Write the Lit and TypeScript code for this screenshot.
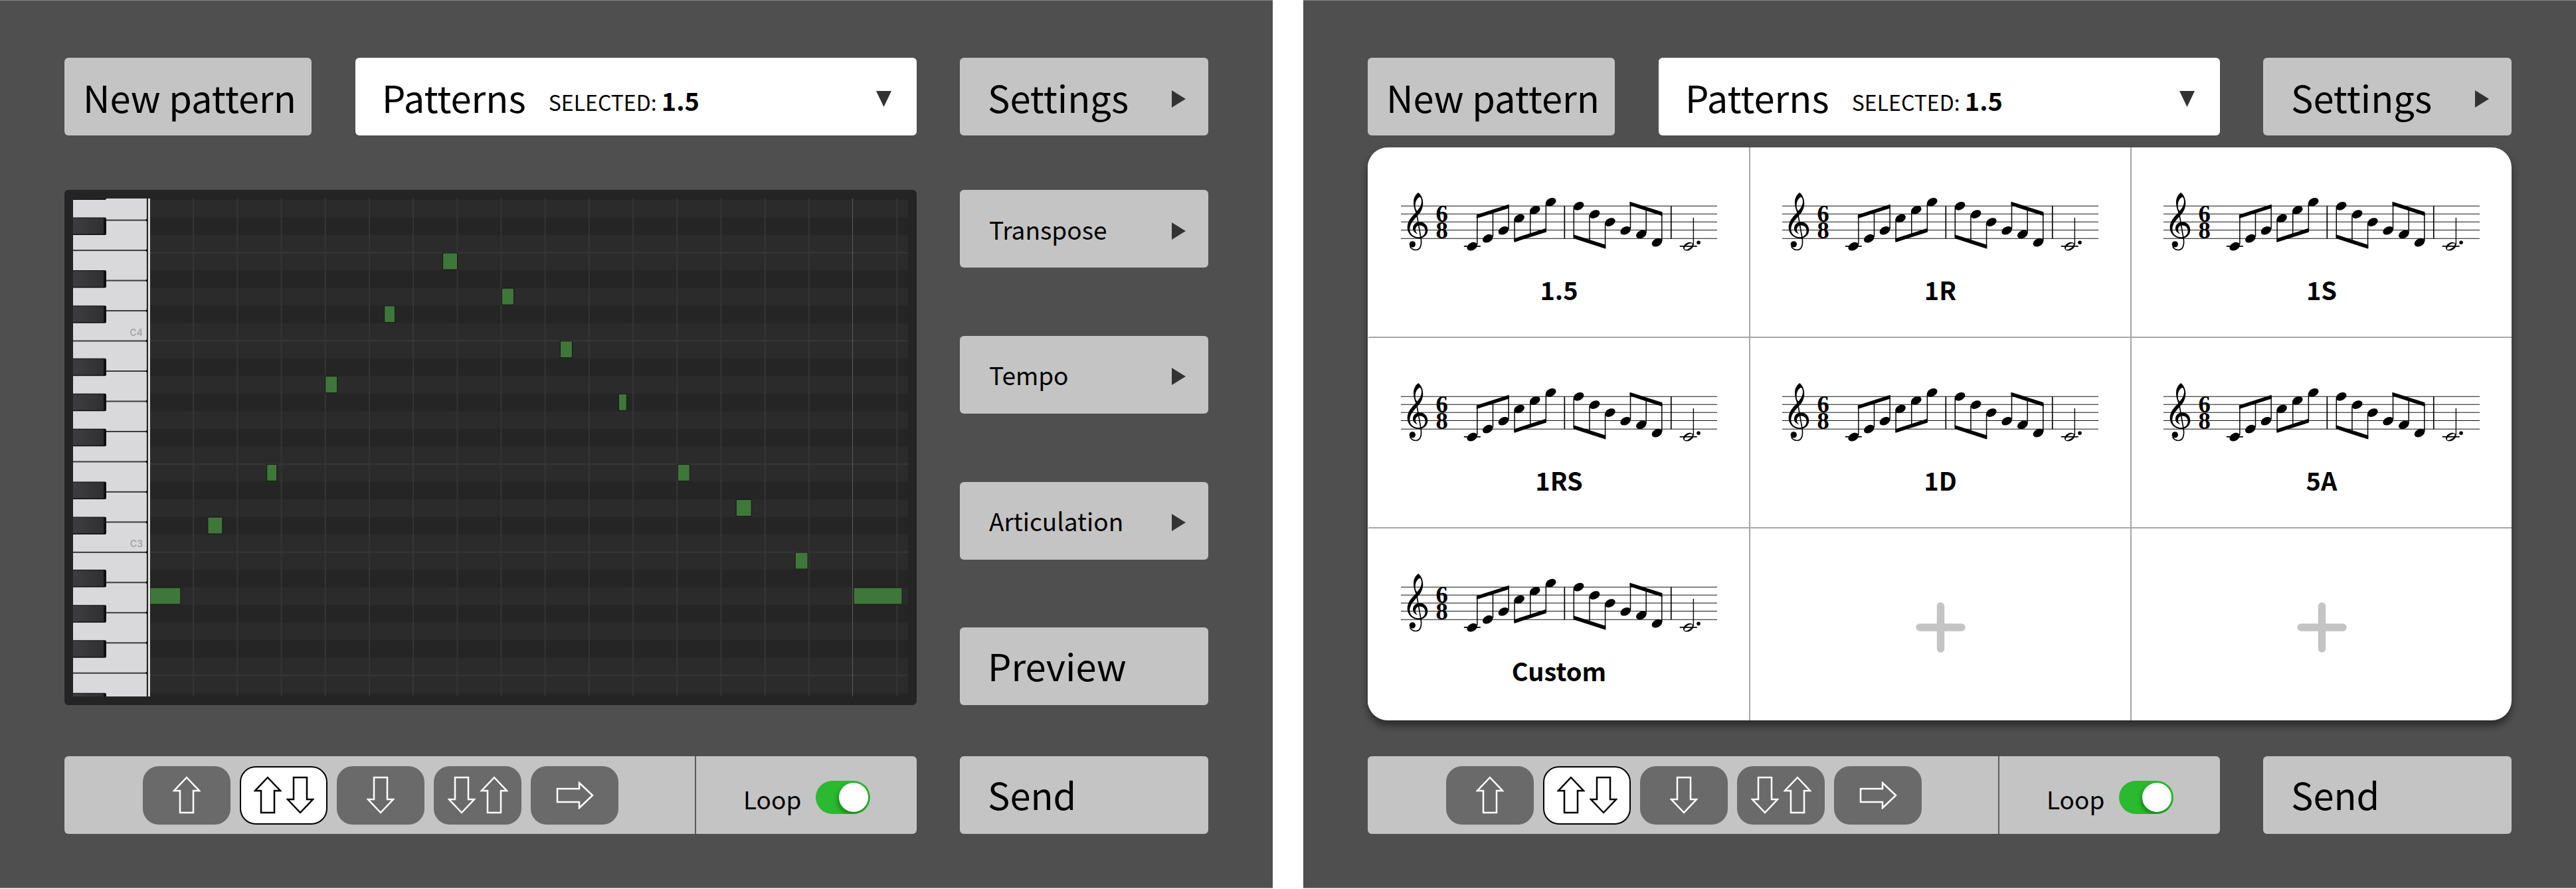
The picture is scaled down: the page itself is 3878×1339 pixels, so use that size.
import { LitElement, html, svg, css } from "lit";
import { customElement, property, state } from "lit/decorators.js";
import { classMap } from "lit/directives/class-map.js";

const FONT = css`"Noto Sans CJK JP", "Open Sans", sans-serif`;

/* ---------- piano roll ---------- */

const ROLL_W = 1258;
const ROLL_H = 751;
const GRID_LEFT = 116;
const ROW_TOP = 2;
const ROW_H = 318.6 / 12;
const BEAT_W = 66.25;
const WHITE_KEY_H = 318.6 / 7;
const KEY_W = 111;

const BLACK_ROWS = [-1, 1, 4, 6, 9, 11, 13, 16, 18, 21, 23, 25, 28];
const DIVIDER_ROWS = [3, 8, 15, 20, 27];

interface RollNote {
  x: number;
  width: number;
  row: number;
}

const ROLL_NOTES: RollNote[] = [
  { x: 116, width: 46, row: 22 },
  { x: 203, width: 22, row: 18 },
  { x: 292, width: 15, row: 15 },
  { x: 380, width: 18, row: 10 },
  { x: 469, width: 16, row: 6 },
  { x: 557, width: 22, row: 3 },
  { x: 646, width: 18, row: 5 },
  { x: 734, width: 18, row: 8 },
  { x: 822, width: 12, row: 11 },
  { x: 911, width: 18, row: 15 },
  { x: 999, width: 23, row: 17 },
  { x: 1088, width: 19, row: 20 },
  { x: 1176, width: 73, row: 22 },
];

const rowY = (row: number) => ROW_TOP + row * ROW_H;

@customElement("piano-roll")
export class PianoRoll extends LitElement {
  static styles = css`
    :host {
      display: block;
      padding: 13px;
      border-radius: 6px;
      background: #242424;
    }
    .roll {
      display: block;
      width: 100%;
      height: auto;
    }
    .key-label {
      font: 600 14px Inter, "Liberation Sans", sans-serif;
      fill: #a6a6a8;
    }
  `;

  render() {
    const beats = Array.from({ length: 17 }, (_, i) => i + 1);
    const keyEdges = Array.from({ length: 22 }, (_, i) => i - 4);
    return html`
      <svg class="roll" viewBox="0 0 ${ROLL_W} ${ROLL_H}" role="img" aria-label="Piano roll">
        <defs>
          <linearGradient id="blackKey" x1="0" x2="1" y1="0" y2="0">
            <stop offset="0" stop-color="#3f3f43"></stop>
            <stop offset="1" stop-color="#303032"></stop>
          </linearGradient>
        </defs>
        <rect x=${GRID_LEFT} y="0" width=${ROLL_W - GRID_LEFT} height=${ROLL_H} fill="#2b2b2b"></rect>
        ${BLACK_ROWS.map((row) => {
          const y = Math.max(0, rowY(row));
          const bottom = Math.min(ROLL_H, rowY(row + 1));
          return svg`<rect x=${GRID_LEFT} y=${y} width=${ROLL_W - GRID_LEFT} height=${bottom - y} fill="#252525"></rect>`;
        })}
        ${DIVIDER_ROWS.map(
          (row) => svg`<rect x=${GRID_LEFT} y=${rowY(row) - 1} width=${ROLL_W - GRID_LEFT} height="2" fill="#373737"></rect>`
        )}
        ${beats.map(
          (i) => svg`<rect x=${114 + i * BEAT_W} y="0" width=${i === 16 ? 1 : 2} height=${ROLL_H}
            fill=${i === 16 ? "#606060" : "#353535"}></rect>`
        )}
        ${ROLL_NOTES.map(
          (n) => svg`<rect x=${n.x} y=${rowY(n.row) + 0.5} width=${n.width} height="25"
            fill="#3f773a" stroke="#161616" stroke-width="1"></rect>`
        )}
        <rect x="0" y="0" width=${KEY_W} height=${ROLL_H} fill="#d9d9db"></rect>
        <rect x=${KEY_W} y="0" width="3" height=${ROLL_H} fill="#1d1d1e"></rect>
        <rect x="113" y="0" width="3" height=${ROLL_H} fill="#e4e4e4"></rect>
        ${keyEdges.map((i) => {
          const y = 214.7 + i * WHITE_KEY_H;
          return svg`<rect x="0" y=${y - 1} width=${KEY_W} height="2" fill="#3b3b3d"></rect>
            <path d="M${KEY_W + 1} ${y - 3}l-3 3l3 3z" fill="#111"></path>`;
        })}
        ${BLACK_ROWS.map((row) => {
          const y = Math.max(-25, rowY(row));
          return svg`<rect x="-4" y=${y} width="54" height="26.5" rx="2" fill="#0f0f10"></rect>
            <rect x="-4" y=${y + 1} width="50" height="24" rx="1" fill="url(#blackKey)"></rect>`;
        })}
        <text class="key-label" x="105" y="207" text-anchor="end">C4</text>
        <text class="key-label" x="105" y="525" text-anchor="end">C3</text>
      </svg>
    `;
  }
}

/* ---------- pattern notation ---------- */

const STAFF_LINES = [91, 127, 163, 200, 238];

const NOTE_HEADS = [
  [346, 274], [417, 238], [488, 202], [559, 147], [630, 109], [702, 73],
  [828, 91], [900, 128], [970, 164], [1040, 202], [1111, 219], [1182, 256],
];

const STEMS = [
  [369, 265, 135], [440, 230, 112], [511, 195, 90],
  [538, 155, 250], [609, 115, 225], [680, 80, 205],
  [806, 95, 230], [877, 132, 250], [948, 168, 280],
  [1062, 195, 75], [1133, 212, 100], [1204, 250, 125],
];

const BEAMS = [
  "366,131 513,83 513,101 366,147",
  "536,238 682,191 682,209 536,255",
  "804,220 950,267 950,285 804,237",
  "1059,71 1206,118 1206,136 1059,88",
];

@customElement("pattern-score")
export class PatternScore extends LitElement {
  static styles = css`
    :host {
      display: block;
    }
    .score {
      display: block;
      width: 100%;
      height: auto;
    }
    .meter {
      font: bold 110px "Liberation Serif", serif;
    }
  `;

  render() {
    return html`
      <svg class="score" viewBox="24 0 1430 330" role="img" aria-label="Notation in six eight">
        ${STAFF_LINES.map(
          (y) => svg`<path d="M24 ${y}H1454" stroke="#111" stroke-width="3.2"></path>`
        )}
        <path
          fill-rule="evenodd"
          d="M103 30C118 43 125 62 124 82C122 110 108 126 97 138C78 157 64 174 64 197C64 218 82 232 103 232C122 232 134 220 134 203C134 188 122 179 110 179C98 179 90 187 90 198C90 206 94 212 100 217C84 213 77 202 78 190C80 174 92 163 109 163C131 163 145 180 145 200C145 222 128 238 104 238C74 238 53 216 53 188C53 160 72 140 91 121C84 102 81 90 81 74C81 52 92 37 103 30ZM109 50C97 56 89 70 89 88C89 98 91 106 95 115C107 103 117 88 117 70C117 60 114 52 109 50Z"
        ></path>
        <path d="M92 108L114 235C119 264 114 289 91 290C80 290 70 284 65 274" fill="none" stroke="#000" stroke-width="5"></path>
        <circle cx="76" cy="264" r="14"></circle>
        <text class="meter" text-anchor="middle"><tspan x="209" y="163">6</tspan><tspan x="209" y="237">8</tspan></text>
        <path d="M309 273H384M1285 273H1363" stroke="#000" stroke-width="5"></path>
        ${NOTE_HEADS.map(
          ([x, y]) => svg`<ellipse cx=${x} cy=${y} rx="25" ry="17" transform="rotate(-28 ${x} ${y})"></ellipse>`
        )}
        ${STEMS.map(([x, a, b]) => svg`<path d="M${x} ${a}V${b}" stroke="#000" stroke-width="4.4"></path>`)}
        ${BEAMS.map((p) => svg`<polygon points=${p}></polygon>`)}
        <path d="M764 91V238M1246 91V238" stroke="#000" stroke-width="5"></path>
        <g transform="rotate(-28 1324 274)">
          <path
            fill-rule="evenodd"
            d="M1299 274a25 17 0 1 0 50 0a25 17 0 1 0 -50 0ZM1303 276a21 9 -8 1 0 42 -4a21 9 -8 1 0 -42 4Z"
          ></path>
        </g>
        <path d="M1347 144V266" stroke="#000" stroke-width="4"></path>
        <circle cx="1370" cy="256" r="8.5"></circle>
      </svg>
    `;
  }
}

/* ---------- one screen of the sequencer ---------- */

type Direction = "up" | "down" | "right";

const ARROWS: Record<Direction, string> = {
  up: "M21 2L40 22H31V55H11V22H2Z",
  down: "M21 55L40 35H31V2H11V35H2Z",
  right: "M55 21L35 2V11H2V31H35V40Z",
};

const PLAY_ORDERS: { name: string; arrows: Direction[] }[] = [
  { name: "Ascending", arrows: ["up"] },
  { name: "Ascending then descending", arrows: ["up", "down"] },
  { name: "Descending", arrows: ["down"] },
  { name: "Descending then ascending", arrows: ["down", "up"] },
  { name: "In place", arrows: ["right"] },
];

const PATTERNS = ["1.5", "1R", "1S", "1RS", "1D", "5A", "Custom", null, null];

@customElement("sequencer-screen")
export class SequencerScreen extends LitElement {
  @property({ type: Boolean }) open = false;
  @property() uid = "a";
  @state() private order = 1;
  @state() private selected = "1.5";

  static styles = css`
    :host {
      display: flex;
      flex-direction: column;
      box-sizing: border-box;
      padding: 86px 97px 81px;
      border-top: 1px solid #868686;
      border-bottom: 1px solid #a6a6a6;
      background: #4f4f4f;
      color: #000;
      font-family: ${FONT};
    }
    button {
      margin: 0;
      border: 0;
      font: inherit;
      color: inherit;
      text-align: left;
      cursor: pointer;
    }
    .row {
      display: grid;
      grid-template-columns: minmax(0, 1283fr) minmax(0, 374fr);
      column-gap: 65px;
    }
    .top {
      display: grid;
      grid-template-columns: minmax(0, 372fr) minmax(0, 845fr);
      column-gap: 66px;
    }
    .box {
      display: flex;
      align-items: center;
      box-sizing: border-box;
      height: 117px;
      border-radius: 6px;
      background: #c4c4c4;
      white-space: nowrap;
      line-height: 60px;
    }
    .large {
      padding: 0 34px 0 42px;
      font-size: 56px;
    }
    .small {
      padding: 0 34px 0 44px;
      font-size: 37px;
    }
    .new {
      padding: 0 0 0 28px;
    }
    .raised {
      padding-bottom: 4px;
    }
    .picker {
      padding: 0 38px 0 40px;
      background: #fff;
    }
    .selection {
      padding: 12px 0 0 34px;
      font-size: 32px;
    }
    .selection strong {
      font-size: 38px;
      font-weight: 700;
    }
    .caret {
      flex: none;
      margin: 6px 0 0 auto;
      fill: #333;
    }
    .main {
      margin: 82px 0 77px;
    }
    .side {
      display: flex;
      flex-direction: column;
      justify-content: space-between;
    }
    .popover {
      display: grid;
      grid-template-columns: repeat(3, minmax(0, 1fr));
      grid-template-rows: 287px 287px 289px;
      margin: 18px 0 54px;
      border-radius: 30px;
      background: #fff;
      box-shadow: 0 8px 12px rgba(0, 0, 0, 0.45);
      overflow: hidden;
    }
    .cell {
      box-sizing: border-box;
      padding: 58px 48px 0;
      background: transparent;
      border-left: 2px solid #a6a6a6;
      border-bottom: 2px solid #a6a6a6;
      display: flex;
      flex-direction: column;
      align-items: stretch;
    }
    .cell:nth-child(3n + 1) {
      border-left-color: #fff;
    }
    .cell:nth-child(n + 7) {
      border-bottom: 0;
    }
    .cell.empty {
      align-items: center;
      justify-content: center;
      padding: 8px 0 0;
    }
    .label {
      margin-top: 26px;
      font-size: 38px;
      font-weight: 700;
      line-height: 40px;
      text-align: center;
    }
    .bar {
      display: grid;
      grid-template-columns: minmax(0, 949fr) minmax(0, 334fr);
      align-items: stretch;
    }
    .orders {
      display: flex;
      align-items: center;
      gap: 14px;
      padding-left: 118px;
    }
    .order {
      display: flex;
      align-items: center;
      justify-content: center;
      gap: 7px;
      box-sizing: border-box;
      width: 132px;
      height: 88px;
      padding: 0;
      border-radius: 24px;
      background: #6a6a6a;
      color: #fff;
    }
    .order.active {
      border: 2px solid #000;
      background: #fff;
      color: #000;
    }
    .arrow {
      fill: none;
      stroke: currentColor;
      stroke-width: 2.5;
    }
    .loop {
      display: flex;
      align-items: center;
      gap: 22px;
      padding-left: 71px;
      border-left: 2px solid #5c5c5c;
      font-size: 37px;
    }
    .loop label {
      padding-top: 10px;
    }
    .switch {
      appearance: none;
      width: 82px;
      height: 50px;
      margin: 6px 0 0;
      padding: 3px;
      box-sizing: border-box;
      border-radius: 25px;
      background: #8a8a8a;
      cursor: pointer;
      overflow: hidden;
    }
    .switch::before {
      content: "";
      display: block;
      width: 44px;
      height: 44px;
      border-radius: 50%;
      background: #fff;
      box-shadow: -2px 4px 6px rgba(0, 0, 0, 0.3);
    }
    .switch:checked {
      background: #2ab92f;
    }
    .switch:checked::before {
      margin-left: auto;
    }
  `;

  private caretRight() {
    return html`<svg class="caret" width="21" height="26" viewBox="0 0 21 26" aria-hidden="true">
      <path d="M0 0L21 13L0 26Z"></path>
    </svg>`;
  }

  private renderMain() {
    return html`
      <main class="row main">
        <piano-roll></piano-roll>
        <div class="side">
          ${["Transpose", "Tempo", "Articulation"].map(
            (name) => html`<button class="box small" type="button">${name}${this.caretRight()}</button>`
          )}
          <button class="box large raised" type="button">Preview</button>
        </div>
      </main>
    `;
  }

  private renderPatterns() {
    return html`
      <main class="popover">
        ${PATTERNS.map((name) =>
          name
            ? html`<button class="cell" type="button" @click=${() => (this.selected = name)}>
                <pattern-score></pattern-score>
                <span class="label">${name}</span>
              </button>`
            : html`<button class="cell empty" type="button" aria-label="Add pattern">
                <svg width="75" height="76" viewBox="0 0 75 76" aria-hidden="true">
                  <path d="M6 38H69M37.5 6V70" stroke="#c4c4c4" stroke-width="11.5" stroke-linecap="round"></path>
                </svg>
              </button>`
        )}
      </main>
    `;
  }

  render() {
    return html`
      <header class="row">
        <div class="top">
          <button class="box large new" type="button">New pattern</button>
          <button
            class="box large picker"
            type="button"
            aria-expanded=${this.open ? "true" : "false"}
            @click=${() => (this.open = !this.open)}
          >
            <span>Patterns</span>
            <span class="selection">SELECTED: <strong>${this.selected}</strong></span>
            <svg class="caret" width="23" height="24" viewBox="0 0 23 24" aria-hidden="true">
              <path d="M0 0H23L11.5 24Z"></path>
            </svg>
          </button>
        </div>
        <button class="box large" type="button">Settings${this.caretRight()}</button>
      </header>
      ${this.open ? this.renderPatterns() : this.renderMain()}
      <footer class="row">
        <div class="box bar">
          <div class="orders">
            ${PLAY_ORDERS.map(
              (o, i) => html`<button
                class=${classMap({ order: true, active: i === this.order })}
                type="button"
                aria-label=${o.name}
                aria-pressed=${i === this.order ? "true" : "false"}
                @click=${() => (this.order = i)}
              >
                ${o.arrows.map((a) =>
                  a === "right"
                    ? html`<svg class="arrow" width="57" height="42" viewBox="0 0 57 42"><path d=${ARROWS[a]}></path></svg>`
                    : html`<svg class="arrow" width="42" height="57" viewBox="0 0 42 57"><path d=${ARROWS[a]}></path></svg>`
                )}
              </button>`
            )}
          </div>
          <div class="loop">
            <label for="loop-${this.uid}">Loop</label>
            <input id="loop-${this.uid}" class="switch" type="checkbox" role="switch" checked />
          </div>
        </div>
        <button class="box large raised" type="button">Send</button>
      </footer>
    `;
  }
}

@customElement("app-root")
export class AppRoot extends LitElement {
  static styles = css`
    :host {
      display: grid;
      grid-template-columns: repeat(2, minmax(0, 1fr));
      column-gap: 46px;
      background: #fff;
    }
  `;

  render() {
    return html`
      <sequencer-screen uid="a"></sequencer-screen>
      <sequencer-screen uid="b" open></sequencer-screen>
    `;
  }
}
